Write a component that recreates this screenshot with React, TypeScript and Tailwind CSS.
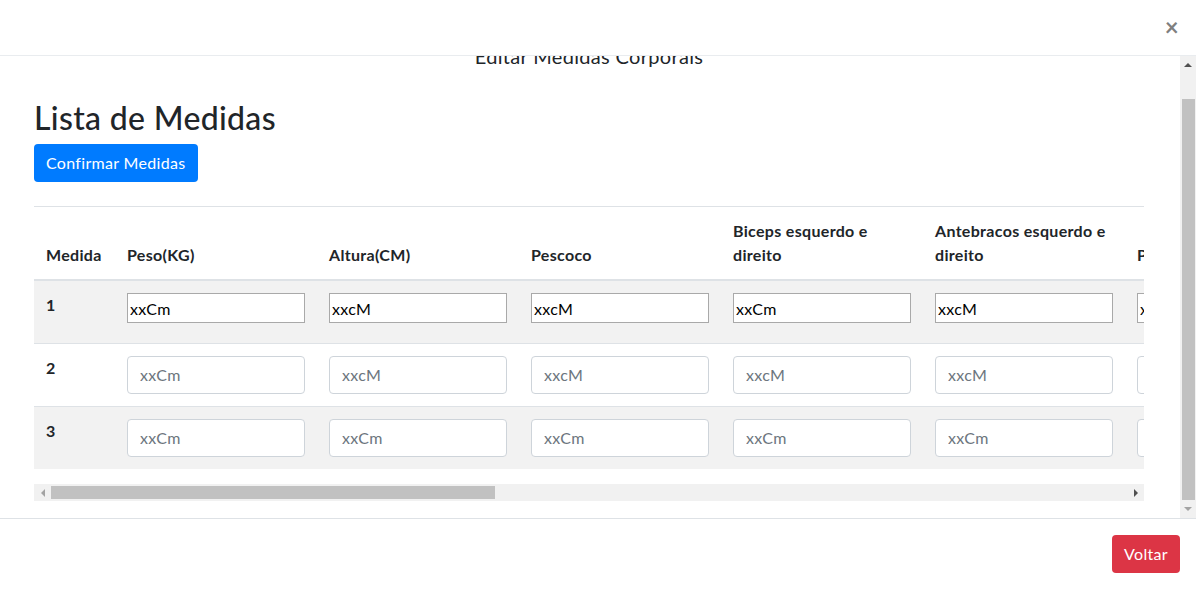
import React from 'react';

const font = { fontFamily: 'Lato, "Noto Sans", sans-serif' };

const headers = ['Peso(KG)', 'Altura(CM)', 'Pescoco', 'Biceps esquerdo e direito', 'Antebracos esquerdo e direito', 'Peitoral'];

const rows = [
  { id: 1, plain: true, values: ['xxCm', 'xxcM', 'xxcM', 'xxCm', 'xxcM', 'xxCm'] },
  { id: 2, plain: false, values: ['xxCm', 'xxcM', 'xxcM', 'xxcM', 'xxcM', 'xxCm'] },
  { id: 3, plain: false, values: ['xxCm', 'xxCm', 'xxCm', 'xxCm', 'xxCm', 'xxCm'] },
];

const Arrow = ({ dir, light }: { dir: 'up' | 'down' | 'left' | 'right'; light?: boolean }) => {
  const pts = {
    up: '0,4 4,0 8,4',
    down: '0,0 8,0 4,4',
    left: '4,0 4,8 0,4',
    right: '0,0 0,8 4,4',
  }[dir];
  const vertical = dir === 'up' || dir === 'down';
  return (
    <svg width={vertical ? 8 : 4} height={vertical ? 4 : 8} viewBox={vertical ? '0 0 8 4' : '0 0 4 8'}>
      <polygon points={pts} fill={light ? '#a3a3a3' : '#505050'} />
    </svg>
  );
};

export default function App() {
  return (
    <div className="w-[1196px] h-[589px] bg-white flex flex-col text-[#212529] tracking-[0.02em] overflow-hidden" style={font}>
      {/* Header */}
      <div className="h-[56px] shrink-0 border-b border-[#e9ecef] flex items-center justify-end pr-[17px]">
        <span className="text-[24px] font-bold leading-none text-[#7f7f7f] -mt-[2px]">×</span>
      </div>

      {/* Body */}
      <div className="flex-1 flex min-h-0">
        <div className="flex-1 overflow-hidden pl-[34px] pr-[36px]">
          <div className="-mt-[15px]">
            <h4 className="text-[20px] leading-[30px] text-center">Editar Medidas Corporais</h4>
            <h2 className="mt-[28px] mb-[7px] text-[32px] leading-[38px] font-medium">Lista de Medidas</h2>
            <button className="bg-[#007bff] text-white text-[16px] leading-[24px] px-[12px] py-[7px] rounded-[4px]">
              Confirmar Medidas
            </button>

            <div className="mt-[24px] overflow-hidden">
              <table className="table-fixed w-[1293px] border-collapse text-[16px] leading-[24px]">
                <thead>
                  <tr>
                    <th className="w-[81px] p-[12px] text-left align-bottom border-t border-[#dee2e6] border-b-2 font-bold">Medida</th>
                    {headers.map((h) => (
                      <th key={h} className="w-[202px] p-[12px] text-left align-bottom border-t border-[#dee2e6] border-b-2 font-bold">
                        {h}
                      </th>
                    ))}
                  </tr>
                </thead>
                <tbody>
                  {rows.map((r) => (
                    <tr key={r.id} className={r.id % 2 === 1 ? 'bg-[#f2f2f2]' : 'bg-white'}>
                      <th className="h-[63px] px-[12px] pt-[12px] text-left align-top border-t border-[#dee2e6] font-bold">{r.id}</th>
                      {r.values.map((v, i) => (
                        <td key={i} className="px-[12px] pt-[12px] align-top border-t border-[#dee2e6]">
                          {r.plain ? (
                            <input
                              readOnly
                              value={v}
                              className="w-[178px] h-[30px] border border-[#a9a9a9] bg-white px-[2px] text-[16px] text-black outline-none"
                              style={font}
                            />
                          ) : (
                            <input
                              readOnly
                              placeholder={v}
                              className="w-[178px] h-[38px] border border-[#ced4da] rounded-[4px] bg-white px-[12px] text-[16px] placeholder:text-[#6c757d] outline-none"
                              style={font}
                            />
                          )}
                        </td>
                      ))}
                    </tr>
                  ))}
                </tbody>
              </table>
            </div>

            {/* horizontal scrollbar */}
            <div className="mt-[15px] h-[17px] bg-[#f1f1f1] flex items-center">
              <div className="w-[17px] h-full flex items-center justify-center">
                <Arrow dir="left" light />
              </div>
              <div className="w-[444px] h-[13px] bg-[#c1c1c1]" />
              <div className="flex-1" />
              <div className="w-[17px] h-full flex items-center justify-center">
                <Arrow dir="right" />
              </div>
            </div>
          </div>
        </div>

        {/* vertical scrollbar */}
        <div className="w-[16px] shrink-0 bg-[#f1f1f1] flex flex-col items-center">
          <div className="h-[17px] flex items-center justify-center">
            <Arrow dir="up" />
          </div>
          <div className="mt-[26px] w-[13px] h-[401px] bg-[#c1c1c1]" />
          <div className="flex-1 flex items-center justify-center">
            <Arrow dir="down" light />
          </div>
        </div>
      </div>

      {/* Footer */}
      <div className="h-[71px] shrink-0 border-t border-[#dee2e6] flex items-center justify-end pr-[16px]">
        <button className="bg-[#dc3545] text-white text-[16px] leading-[24px] px-[12px] py-[7px] rounded-[4px]">Voltar</button>
      </div>
    </div>
  );
}
